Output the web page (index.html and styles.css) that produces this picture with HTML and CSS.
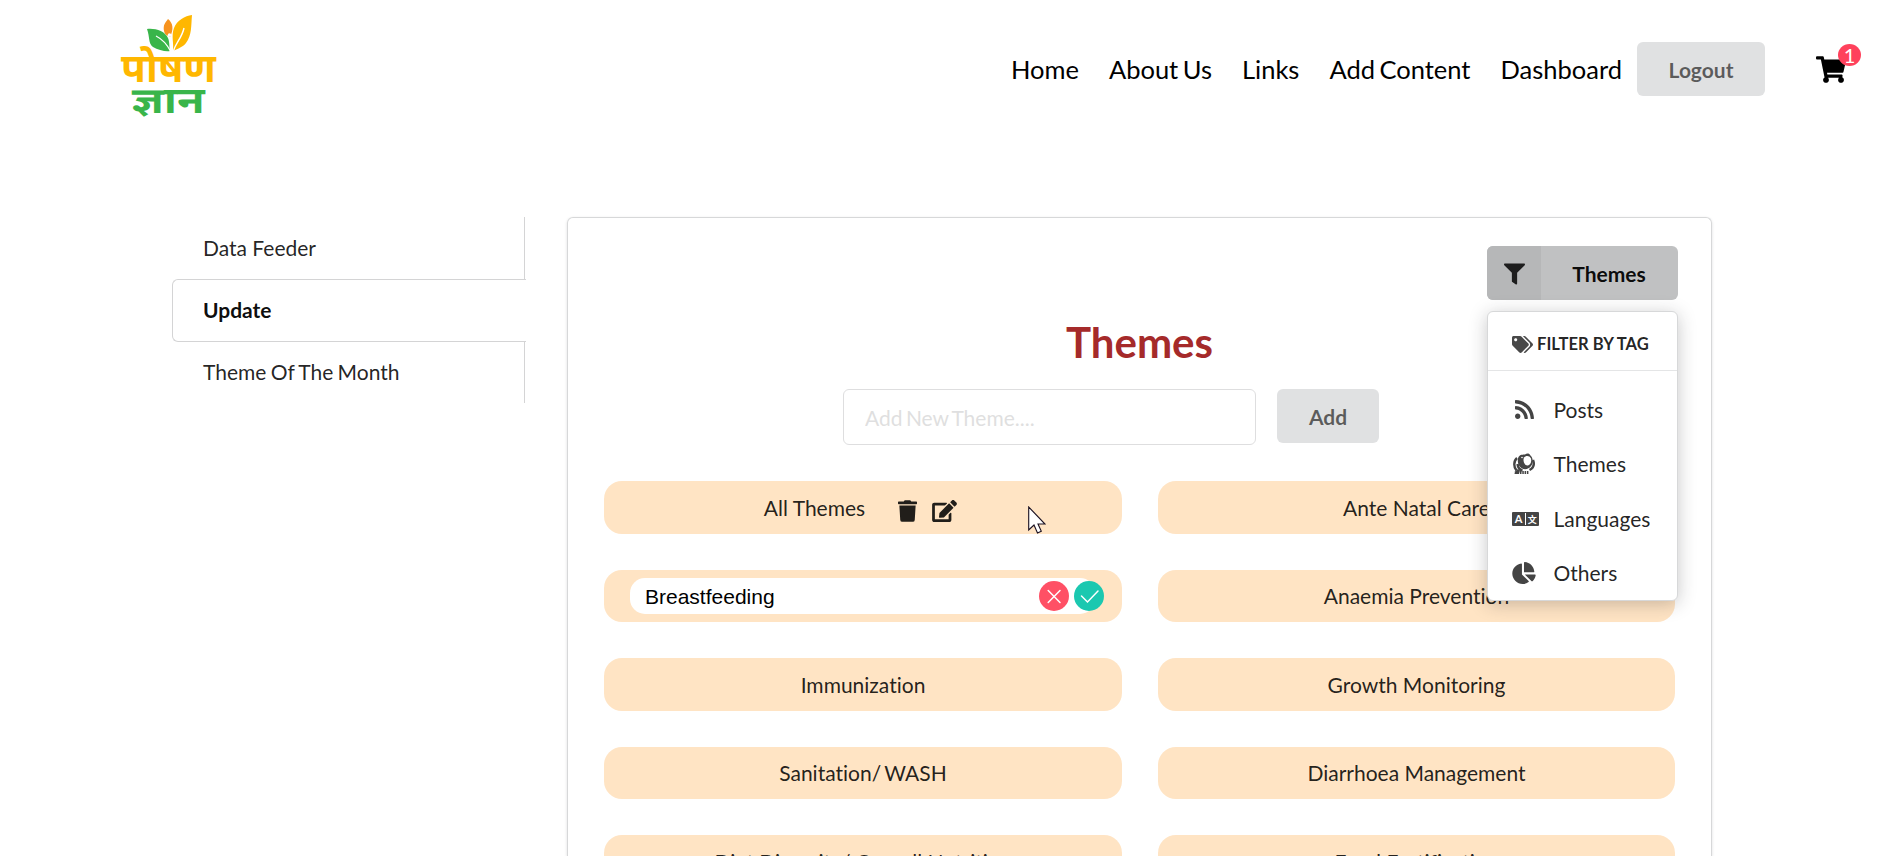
FILE: index.html
```html
<!DOCTYPE html>
<html lang="en">
<head>
<meta charset="utf-8">
<title>Poshan Gyan</title>
<link rel="stylesheet" href="styles.css">
</head>
<body>
<header class="topbar">
  <a class="logo" href="#">
    <svg class="logo-leaves" viewBox="0 0 46 40" aria-hidden="true">
      <path fill="#39b54a" d="M1 15C9 14 19 17 22 24C24 29 23 34 24 37C20 38 12 36 7 33C2 29 4 23 1 15Z"/>
      <path fill="none" stroke="#fff" stroke-width="1.3" d="M10 22C16 25 21 30 25 38"/>
      <path fill="#f7931e" d="M22 5C27 9 28 15 24 23C22 21 19 22 18 17C17 11 19 9 22 5Z"/>
      <circle cx="23.500" cy="21" r="1.800" fill="#fff"/>
      <path fill="#ffb700" d="M46 1C45 12 46 21 40 29C37 33 31 35 27 37C28 29 25 22 28 14C31 6 39 2 46 1Z"/>
      <path fill="none" stroke="#fff" stroke-width="1.400" d="M38 14C36 24 30 28 27 38"/>
    </svg>
    <span class="logo-top" lang="hi">पोषण</span>
    <span class="logo-bottom" lang="hi">ज्ञान</span>
  </a>
  <nav class="nav">
    <a href="#">Home</a><a href="#">About Us</a><a href="#">Links</a><a href="#">Add Content</a><a href="#">Dashboard</a>
  </nav>
  <button class="button logout">Logout</button>
  <a class="cart" href="#">
    <svg viewBox="0 0 576 512"><path d="M528.12 301.319l47.273-208C578.806 78.301 567.391 64 551.99 64H159.208l-9.166-44.81C147.758 8.021 137.93 0 126.529 0H24C10.745 0 0 10.745 0 24v16c0 13.255 10.745 24 24 24h69.883l70.248 343.435C147.325 417.1 136 435.222 136 456c0 30.928 25.072 56 56 56s56-25.072 56-56c0-15.674-6.447-29.835-16.824-40h209.647C430.447 426.165 424 440.326 424 456c0 30.928 25.072 56 56 56s56-25.072 56-56c0-22.172-12.888-41.332-31.579-50.405l5.517-24.276c3.413-15.018-8.002-29.319-23.403-29.319H218.117l-6.545-32h293.145c11.206 0 20.92-7.754 23.403-18.681z"/></svg>
    <span class="badge">1</span>
  </a>
</header>
<main class="layout">
  <aside class="side">
    <a class="tab" href="#">Data Feeder</a>
    <a class="tab active" href="#">Update</a>
    <a class="tab tight" href="#">Theme Of The Month</a>
  </aside>
  <section class="panel">
    <div class="filter">
      <button class="filter-button">
        <span class="filter-icon"><svg viewBox="0 0 512 512"><path d="M487.976 0H24.028C2.71 0-8.047 25.866 7.058 40.971L192 225.941V432c0 7.831 3.821 15.17 10.237 19.662l80 55.98C298.02 518.69 320 507.493 320 487.98V225.941l184.947-184.97C520.021 25.896 509.338 0 487.976 0z"/></svg></span>
        <span class="filter-label">Themes</span>
      </button>
      <div class="menu">
        <div class="menu-header">
          <svg viewBox="0 0 640 512"><path d="M497.941 225.941L286.059 14.059A48 48 0 0 0 252.118 0H48C21.49 0 0 21.49 0 48v204.118a48 48 0 0 0 14.059 33.941l211.882 211.882c18.744 18.745 49.136 18.746 67.882 0l204.118-204.118c18.745-18.745 18.745-49.137 0-67.882zM112 160c-26.51 0-48-21.49-48-48s21.49-48 48-48 48 21.49 48 48-21.49 48-48 48zm513.941 133.823L421.823 497.941c-18.745 18.745-49.137 18.745-67.882 0l-.36-.36L527.64 323.522c16.999-16.999 26.36-39.6 26.36-63.64s-9.362-46.641-26.36-63.64L331.397 0h48.721a48 48 0 0 1 33.941 14.059l211.882 211.882c18.745 18.745 18.745 49.137 0 67.882z"/></svg>
          <span>Filter by tag</span>
        </div>
        <a class="menu-item" href="#"><span class="menu-icon"><svg class="rss" viewBox="0 32 448 448"><path d="M128.081 415.959c0 35.369-28.672 64.041-64.041 64.041S0 451.328 0 415.959s28.672-64.041 64.041-64.041 64.04 28.673 64.04 64.041zm175.66 47.25c-8.354-154.6-132.185-278.587-286.95-286.95C7.656 175.765 0 183.105 0 192.253v48.069c0 8.415 6.49 15.472 14.887 16.018 111.832 7.284 201.473 96.702 208.772 208.772.547 8.397 7.604 14.887 16.018 14.887h48.069c9.149.001 16.489-7.655 15.995-16.79zm144.249.288C439.596 229.677 251.465 40.445 16.503 32.01 7.473 31.686 0 38.981 0 48.016v48.068c0 8.625 6.835 15.645 15.453 15.999 191.179 7.839 344.627 161.316 352.465 352.465.353 8.618 7.373 15.453 15.999 15.453h48.068c9.034-.001 16.329-7.474 16.005-16.504z"/></svg></span>Posts</a>
        <a class="menu-item" href="#"><span class="menu-icon"><svg class="isle" viewBox="0 0 22 22">
          <path d="M5.500 4C7 1.500 10 1.500 12 1.500C13.500 0 16.500 0 17 2C20.500 5 20.500 10 18 13C15 17.500 8.500 17 6 12.500C4.500 10 4.500 6 5.500 4Z"/>
          <path fill="#fff" d="M11 4.500C13 2.200 16.500 2.500 17.800 5.200C19 8.500 17.500 12 15 12.500C11.500 13 9.500 8 11 4.500Z"/>
          <circle cx="9" cy="4.500" r=".8" fill="#fff"/>
          <path fill="none" stroke="#444" stroke-width="2.400" d="M4 5C.5 8 .5 14 3.500 17.500M4.500 11C5 15 7 17 9.500 17.500M20 7C21.500 11 20.500 15 16.500 17"/>
          <path d="M2 18.500L5 16L7 17.500L6 21H1.500Z"/>
          <path fill="none" stroke="#444" stroke-dasharray="1.500 .8" stroke-width="3" d="M7 19.500H16"/>
        </svg></span>Themes</a>
        <a class="menu-item" href="#"><span class="menu-icon"><svg class="lang" viewBox="0 0 27 14"><rect width="27" height="14" rx="1"/><path stroke="#fff" d="M13.500 1V13"/><text class="lang-a" x="6.500" y="11">A</text><text class="lang-b" x="20.200" y="10.800">文</text></svg></span>Languages</a>
        <a class="menu-item" href="#"><span class="menu-icon"><svg class="pie" viewBox="0 0 544 512"><path d="M527.79 288H290.5l158.03 158.03c6.04 6.04 15.98 6.53 22.19.68 38.7-36.46 65.32-85.61 73.13-140.86 1.34-9.46-6.51-17.85-16.06-17.85zm-15.83-64.8C503.72 103.74 408.26 8.28 288.8.04 279.68-.59 272 7.1 272 16.24V240h223.77c9.14 0 16.82-7.68 16.19-16.8zM224 288V50.71c0-9.55-8.39-17.4-17.84-16.06C86.99 51.49-4.1 155.6.14 280.37 4.5 408.51 114.83 513.59 243.03 511.98c50.4-.63 96.97-16.87 135.26-44.03 7.9-5.6 8.42-17.23 1.57-24.08L224 288z"/></svg></span>Others</a>
      </div>
    </div>
    <h1 class="title">Themes</h1>
    <form class="add-form">
      <input class="add-input" type="text" placeholder="Add New Theme....">
      <button class="button add-button" type="button">Add</button>
    </form>
    <div class="themes">
      <div class="theme hovered">
        <span>All Themes</span>
        <span class="theme-actions">
          <svg class="trash" viewBox="0 0 448 512"><path d="M432 32H312l-9.400-18.700A24 24 0 0 0 281.100 0H166.800a23.720 23.720 0 0 0-21.400 13.300L136 32H16A16 16 0 0 0 0 48v32a16 16 0 0 0 16 16h416a16 16 0 0 0 16-16V48a16 16 0 0 0-16-16zM53.200 467a48 48 0 0 0 47.900 45h245.800a48 48 0 0 0 47.900-45L416 128H32z"/></svg>
          <svg class="edit" viewBox="0 0 576 512"><path d="M402.6 83.2l90.2 90.2c3.8 3.8 3.8 10 0 13.8L274.4 405.6l-92.8 10.3c-12.4 1.4-22.9-9.1-21.5-21.5l10.3-92.8L388.8 83.2c3.8-3.8 10-3.8 13.8 0zm162-22.9l-48.8-48.8c-15.2-15.2-39.9-15.2-55.2 0l-35.4 35.4c-3.8 3.8-3.8 10 0 13.8l90.2 90.2c3.8 3.8 10 3.8 13.8 0l35.4-35.4c15.2-15.3 15.2-40 0-55.2zM384 346.2V448H64V128h229.8c3.200 0 6.200-1.300 8.500-3.500l40-40c7.600-7.600 2.200-20.500-8.500-20.500H48C21.500 64 0 85.500 0 112v352c0 26.500 21.500 48 48 48h352c26.500 0 48-21.500 48-48V306.200c0-10.700-12.900-16-20.500-8.500l-40 40c-2.200 2.300-3.500 5.300-3.500 8.500z"/></svg>
        </span>
        <svg class="pointer" viewBox="0 0 18 28"><path fill="#fff" stroke="#1a1020" stroke-width="1.100" d="M.7 1V24L6 19L9.500 27L13.300 25.300L10 18H17Z"/></svg>
      </div>
      <div class="theme">Ante Natal Care</div>
      <div class="theme editing">
        <input class="edit-input" type="text" value="Breastfeeding">
        <span class="edit-actions">
          <svg viewBox="0 0 30 30"><circle cx="15" cy="15" r="15" fill="#ff5065"/><path d="M9.200 9.500L21 21.500M21 9.500L9.200 21.500"/></svg>
          <svg viewBox="0 0 30 30"><circle cx="15" cy="15" r="15" fill="#1bc8b0"/><path d="M7.500 15L13.500 21L24 10"/></svg>
        </span>
      </div>
      <div class="theme">Anaemia Prevention</div>
      <div class="theme">Immunization</div>
      <div class="theme">Growth Monitoring</div>
      <div class="theme tight">Sanitation/ WASH</div>
      <div class="theme">Diarrhoea Management</div>
      <div class="theme">Diet Diversity/ Overall Nutrition</div>
      <div class="theme">Food Fortification</div>
    </div>
  </section>
</main>
</body>
</html>
```
FILE: styles.css
```css
* { box-sizing: border-box; }
html { height: 100%; overflow: hidden; }
body {
  display: flex;
  flex-direction: column;
  margin: 0;
  height: 856px;
  overflow: hidden;
  background: #fff;
  color: rgba(0, 0, 0, .87);
  font: 21px/30px Lato, sans-serif;
  font-variant-ligatures: none;
}
a { color: inherit; text-decoration: none; }
svg { display: block; flex: none; fill: currentColor; }
button { border: 0; font-family: inherit; cursor: pointer; }

.topbar {
  display: flex;
  flex: none;
  align-items: center;
  height: 138px;
  padding: 0 20px 0 120px;
}
.logo {
  display: flex;
  flex-direction: column;
  align-items: center;
  align-self: flex-start;
  width: 97px;
  height: 120px;
  padding-top: 14px;
  font-family: "Noto Sans Devanagari", "Noto Sans", sans-serif;
  font-weight: 700;
  font-variant-ligatures: normal;
}
.logo-leaves { width: 46px; height: 40px; margin-bottom: 3px; }
.logo-top { color: #ffb700; font-size: 40.500px; line-height: 32px; }
.logo-bottom { color: #39b54a; font-size: 36px; line-height: 32px; transform: scaleX(1.25); }
.nav {
  display: flex;
  gap: 30px;
  margin-left: auto;
  color: #000;
  font-size: 25.500px;
  word-spacing: -2px;
}
.button {
  height: 54px;
  border-radius: 6px;
  background: #e0e1e2;
  color: rgba(0, 0, 0, .6);
  font-size: 21px;
  font-weight: 700;
}
.logout { width: 128px; margin-left: 15px; }
.cart {
  position: relative;
  width: 50px;
  margin-left: 51px;
  color: #000;
}
.cart svg { width: 30px; height: 27px; }
.badge {
  position: absolute;
  top: -12px;
  left: 22px;
  width: 23px;
  height: 22px;
  border-radius: 50%;
  background: #ff415c;
  color: #fff;
  font-size: 20px;
  line-height: 23px;
  text-align: center;
}

.layout {
  display: flex;
  flex: 1;
  gap: 41px;
  min-height: 0;
  overflow: hidden;
  padding: 79px 0 0 172px;
}
.side {
  display: flex;
  flex-direction: column;
  width: 354px;
}
.tab {
  height: 62px;
  margin-right: 1px;
  padding: 16px 31px;
  border-right: 1px solid #d4d4d5;
}
.tab.tight { word-spacing: -1px; }
.tab.active {
  height: 63px;
  margin: 0;
  margin-bottom: -1px;
  padding: 15px 30px;
  border: 1px solid #d4d4d5;
  border-right: 0;
  border-radius: 6px 0 0 6px;
  color: rgba(0, 0, 0, .95);
  font-weight: 700;
}
.panel {
  width: 1145px;
  padding: 28px 36px 0;
  border: 1px solid #d7d8d9;
  border-bottom: 0;
  border-radius: 6px 6px 0 0;
  box-shadow: 0 1px 3px rgba(34, 36, 38, .15);
}
.filter {
  position: relative;
  z-index: 2;
  width: 191px;
  margin: 0 -3px 0 auto;
}
.filter-button {
  display: flex;
  width: 191px;
  height: 54px;
  padding: 0;
  overflow: hidden;
  border-radius: 6px;
  background: #c0c1c2;
  color: rgba(0, 0, 0, .95);
  font-size: 21px;
  font-weight: 700;
}
.filter-icon {
  display: grid;
  place-items: center;
  width: 54px;
  height: 54px;
  background: #b6b7b8;
}
.filter-icon svg { width: 21px; height: 22px; margin-top: 2px; color: #1d1d1d; }
.filter-label { flex: 1; padding-right: 1px; line-height: 56px; }
.menu {
  position: absolute;
  top: 65px;
  left: 0;
  width: 191px;
  height: 290px;
  border: 1px solid #d7d8d9;
  border-radius: 6px;
  background: #fff;
  box-shadow: 0 3px 18px rgba(34, 36, 38, .25);
}
.menu-header {
  display: flex;
  align-items: center;
  gap: 4px;
  height: 59px;
  margin-bottom: 11.500px;
  padding: 6px 0 0 24px;
  border-bottom: 1px solid #e4e5e6;
  font-size: 16.600px;
  font-weight: 700;
  text-transform: uppercase;
  white-space: nowrap;
}
.menu-header svg { width: 21px; height: 17px; color: #484848; }
.menu-item { display: flex; align-items: center; height: 54.500px; padding-left: 24px; }
.menu-icon { display: flex; width: 41.500px; color: #444; }
.rss { width: 19px; height: 19px; margin-left: 3px; }
.isle { width: 22px; height: 22px; margin-left: 1px; }
.lang { width: 27px; height: 14px; }
.lang text { fill: #fff; text-anchor: middle; font-weight: 700; }
.lang-a { font-size: 11px; }
.lang-b { font-family: "Noto Sans CJK SC", sans-serif; font-size: 9px; }
.pie { width: 24px; height: 22px; }

.title {
  margin: 14px 0 19px;
  color: #a52a2a;
  font-size: 42px;
  font-weight: 700;
  line-height: 56px;
  text-align: center;
}
.add-form {
  display: flex;
  gap: 21px;
  margin-left: 239px;
}
.add-input {
  width: 413px;
  height: 56px;
  padding: 0 21px;
  border: 1px solid #dededf;
  border-radius: 6px;
  outline: 0;
  font: 21px Lato, sans-serif;
  word-spacing: -2px;
}
.add-input::placeholder { color: #dfdfe0; opacity: 1; }
.add-button { width: 102px; }
.themes {
  display: grid;
  grid-template-columns: 518px 517px;
  grid-auto-rows: 52.500px;
  gap: 36px;
  margin-top: 36px;
}
.theme {
  position: relative;
  display: flex;
  align-items: center;
  justify-content: center;
  padding-top: 1px;
  border-radius: 18px;
  background: #ffe4c4;
}
.theme.hovered { padding-right: 5px; }
.theme.tight { word-spacing: -2px; }
.theme-actions {
  display: flex;
  gap: 15px;
  margin: 7px 0 0 33px;
}
.trash { width: 19px; height: 22px; }
.edit { width: 25px; height: 22px; }
.pointer { position: absolute; left: 424px; top: 25px; width: 18px; height: 28px; }
.theme.editing { justify-content: flex-start; padding: 0 0 0 26px; }
.edit-input {
  width: 465px;
  height: 36px;
  padding: 2px 15px 0;
  border: 0;
  border-radius: 15px;
  outline: 0;
  background: #fff;
  color: #000;
  font: 21px "Liberation Sans", Arial, sans-serif;
}
.edit-actions { position: absolute; left: 435px; top: 11px; display: flex; gap: 5px; }
.edit-actions svg { width: 30px; height: 30px; }
.edit-actions path { fill: none; stroke: #fff; stroke-width: 1.500; stroke-linecap: round; }
```
